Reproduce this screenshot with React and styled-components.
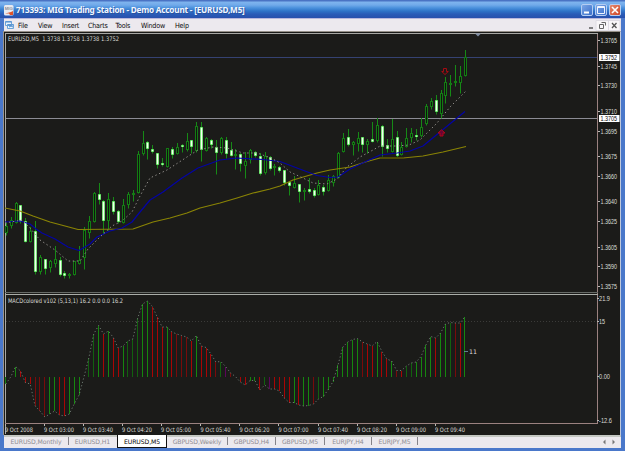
import React from 'react';
import styled, { createGlobalStyle } from 'styled-components';

const Global = createGlobalStyle`
  * { box-sizing: border-box; }
  html, body { margin: 0; padding: 0; overflow: hidden; background: #4a76c6; }
`;

const Frame = styled.div`
  width: 625px;
  height: 451px;
  display: flex;
  flex-direction: column;
  background: #4a78ca;
  font-family: "Noto Sans", "DejaVu Sans", sans-serif;
  overflow: hidden;
`;

const TitleBar = styled.header`
  flex: none;
  height: 18px;
  display: flex;
  align-items: center;
  padding: 2px 4px 0 4px;
  background: linear-gradient(#4a73c4 0, #4a73c4 1px, #7fb4ee 2px, #71aaea 5px, #4a90dc 8px, #2f74c8 11px, #2a5cb8 14px, #2850ac 18px);
`;

const AppLogo = styled.svg`
  flex: none;
  width: 10px;
  height: 11px;
`;

const Title = styled.h1`
  flex: 1;
  margin: 0 0 0 2px;
  font: 700 8.2px/14px "Noto Sans", sans-serif;
  letter-spacing: -0.2px;
  color: #f2f7ff;
  text-shadow: 1px 1px 0 #27519f;
  white-space: pre;
`;

const WindowButtons = styled.div`
  display: flex;
  gap: 2px;
`;

const WindowButton = styled.span`
  width: 12px;
  height: 12px;
  display: block;
  border: 1px solid #b5cdf2;
  border-radius: 2px;
  background: ${(p) => (p.$close ? 'linear-gradient(135deg,#e58a70,#cf4526)' : 'linear-gradient(135deg,#7aa5e6,#3b6fc9)')};
  svg { display: block; }
`;

const MenuBar = styled.nav`
  flex: none;
  height: 13px;
  margin: 0 4px;
  display: flex;
  align-items: center;
  background: #ece9ee;
  border-top: 1px solid #b9b7dc;
`;

const MenuIcon = styled.svg`
  flex: none;
  width: 10px;
  height: 9px;
  margin-right: 3px;
  margin-left: 1px;
`;

const MenuItem = styled.span`
  width: ${(p) => p.$w}px;
  font: 7.1px/11px "DejaVu Sans Condensed", "DejaVu Sans", sans-serif;
  letter-spacing: -0.2px;
  color: #080808;
  white-space: nowrap;
`;

const DocumentButtons = styled.svg`
  flex: none;
  width: 36px;
  height: 11px;
  margin-left: auto;
`;

const Workspace = styled.main`
  flex: none;
  height: 404px;
  margin: 0 4px 0 3px;
  background: #1b1b19;
  border: 1px solid #99948c;
  border-top-color: #969088;
  border-right-color: #bdc7dc;
  border-bottom: 0;
`;

const Chart = styled.svg`
  display: block;
  width: 616px;
  height: 403px;
  text { font-family: "DejaVu Sans", sans-serif; font-size: 6.2px; fill: #dcdcd8; }
  .scale text { font-family: "Liberation Sans Narrow", "Liberation Sans", sans-serif; font-size: 6.6px; }
`;

const TabBar = styled.footer`
  flex: none;
  height: 13px;
  margin: 0 4px;
  display: flex;
  align-items: stretch;
  background: #ece9ee;
  border-top: 2px solid #c4c7c2;
`;

const Tab = styled.span`
  width: ${(p) => p.$w}px;
  height: ${(p) => (p.$active ? 13 : 8)}px;
  margin-top: ${(p) => (p.$active ? -2 : 0)}px;
  padding-top: ${(p) => (p.$active ? 2 : 0)}px;
  text-align: center;
  white-space: nowrap;
  font: 6.2px/9px "DejaVu Sans", sans-serif;
  letter-spacing: -0.13px;
  color: ${(p) => (p.$active ? '#050505' : '#918e93')};
  background: ${(p) => (p.$active ? '#fff' : 'transparent')};
  border: solid #111;
  border-width: ${(p) => (p.$active ? '0 1px 1px 1px' : 0)};
  border-right: 1px solid ${(p) => (p.$active ? '#111' : '#858389')};
  ${(p) => p.$noRule && 'border-right-color: transparent;'}
`;

const TabArrows = styled.svg`
  width: 24px;
  height: 10px;
  margin-left: auto;
`;

const STEP = 4.885;

// [high, body top, body bottom, low, kind]: kind 1 is a filled bearish candle
const candles = [
  [223,226,232,235,0],[217,220,225,228,0],[202,203,222,223,0],[205,205,222,223,1],[218,221,242,242,1],
  [227,231,241,242,0],[221,231,272,274,1],[255,257,271,274,0],[259,259,269,274,1],[260,261,267,272,0],
  [246,259,263,267,0],[257,260,275,276,1],[271,273,276,278,1],[273,274,275,278,0],[261,261,274,275,0],
  [246,260,263,264,0],[227,230,257,269,0],[216,221,232,238,0],[192,193,221,222,0],[183,194,200,204,1],
  [200,201,221,234,1],[193,199,220,230,0],[197,201,212,214,1],[210,211,222,223,1],[199,205,222,223,0],
  [192,194,204,208,0],[190,193,194,201,0],[151,154,192,193,0],[131,143,153,155,0],[141,142,149,159,1],
  [145,149,152,153,1],[153,153,165,168,1],[158,163,165,166,1],[148,148,166,167,0],[147,149,155,158,1],
  [143,147,153,154,0],[144,145,147,152,1],[133,141,149,151,0],[140,140,147,153,1],[122,126,150,152,0],
  [122,127,150,161,1],[137,138,150,151,0],[139,140,145,148,1],[140,147,153,174,1],[137,138,152,154,0],
  [137,140,154,158,1],[142,150,156,156,1],[149,154,155,169,0],[153,154,164,171,1],[152,161,165,178,0],
  [149,150,159,163,0],[151,152,156,157,1],[153,156,174,175,1],[152,156,172,174,0],[156,157,169,170,1],
  [164,166,167,175,0],[166,167,171,172,1],[170,170,183,185,1],[181,182,186,195,1],[176,183,187,188,0],
  [184,184,192,202,1],[188,190,191,200,0],[178,189,192,193,1],[188,190,196,197,1],[180,185,194,195,0],
  [185,187,192,195,1],[175,180,190,191,0],[175,176,182,186,0],[152,153,177,178,0],[133,138,151,152,0],
  [129,137,145,146,1],[141,142,144,155,0],[132,138,143,151,0],[137,137,145,152,1],[139,141,144,153,0],
  [122,139,142,142,1],[118,125,140,142,0],[125,126,147,156,1],[139,145,149,152,1],[119,139,151,152,0],
  [131,137,156,157,1],[142,147,154,155,0],[128,138,146,147,0],[128,133,137,142,0],[129,135,137,140,1],
  [118,127,135,137,0],[104,106,123,125,0],[98,101,106,109,0],[95,100,112,114,1],[90,93,113,118,0],
  [77,82,95,103,0],[75,83,84,96,0],[65,81,82,86,0],[66,76,82,93,0],[50,57,75,76,0],
];

const histogram = [
  [384,'g'],[377,'g'],[366.5,'g'],[371,'r'],[382.5,'r'],[384,'r'],[406,'d'],[411,'d'],[417,'d'],[414,'g'],[411,'g'],[415,'r'],
  [416,'r'],[414,'g'],[404,'g'],[395,'g'],[377,'g'],[358,'f'],[334,'f'],[325.5,'g'],[334,'r'],[331,'g'],[337.5,'r'],[348,'r'],
  [346,'g'],[341,'f'],[339,'f'],[318,'f'],[304,'g'],[301,'g'],[306.5,'r'],[317,'r'],[327,'r'],[327,'g'],[332,'r'],[334,'d'],
  [335.5,'d'],[337,'d'],[341,'r'],[335.5,'g'],[346,'r'],[347.5,'r'],[354,'r'],[362,'d'],[361.5,'f'],[366.5,'p'],[373,'d'],
  [376.5,'r'],[382,'r'],[385,'r'],[380.5,'g'],[380.5,'g'],[390,'r'],[385,'f'],[389,'p'],[389,'r'],[391,'r'],[398,'r'],
  [402.5,'r'],[402.5,'g'],[405,'r'],[406,'g'],[405.5,'g'],[404,'d'],[399,'f'],[396.5,'g'],[389.5,'g'],[381.5,'g'],[365,'g'],
  [347,'g'],[342,'g'],[339.5,'g'],[338.5,'g'],[342,'d'],[344,'r'],[346,'r'],[341.5,'g'],[351.5,'r'],[359,'r'],[361,'g'],
  [370.5,'d'],[370.5,'r'],[366,'f'],[363,'f'],[362,'g'],[356.5,'g'],[345,'g'],[336.5,'g'],[338,'r'],[333,'g'],[324,'g'],
  [322.5,'f'],[323,'d'],[323,'r'],[316.5,'g'],
];

const barColors = { g: '#16860f', f: '#12610f', r: '#a90505', d: '#790b0b', p: '#5c0559' };

const slowAverage = '5,208 20,211 33,216 50,222 65,226 78,229.5 133,229 153,222 170,218 187,213 200,208 220,203 237,198 253,193 270,189 280,186 293,180 317,173 330,170 350,167 367,161.5 380,158 403,158 423,156 443,152 466,146.5';
const midAverage = '5,222 20,221 30,224 36,229 42,233 55,239 68,247 79,250.5 90,244 97,237 110,231 122,228 132,222 140,212 150,200 163,192 182,178 198,168 220,160 237,158 263,159.5 280,161.5 297,168 317,175.5 330,177.5 338,177 350,169 367,161 380,155 397,153 410,151 423,146 440,132 465,111.5';
const fastAverage = '5,223 22,220 30,228 40,240 55,250 68,261 80,261 88,249 100,237 112,226 122,221 132,212 140,196 150,178 167,170 187,157 198,150 213,147 227,148 243,153 257,153 271,158 280,163 290,172 303,178 313,183 327,184 337,179 347,167 360,157 373,150 380,146 397,146 409,145 420,140 437,123 450,107 466,91';

const priceLabels = [
  ['1.3765', 40], ['1.3745', 66], ['1.3730', 85.5], ['1.3710', 111], ['1.3695', 131], ['1.3675', 156],
  ['1.3660', 176], ['1.3640', 201.5], ['1.3625', 221], ['1.3605', 247], ['1.3590', 266], ['1.3575', 286],
];
const markers = [['1.3752', 57], ['1.3705', 118]];
const macdLabels = [['21.9', 298.5, 11], ['15', 321, 6], ['0.00', 376.5, 11], ['-12.6', 420, 13]];
const timeLabels = [
  ['9 Oct 2008', 5, 28], ['9 Oct 03:00', 44, 30], ['9 Oct 03:40', 83, 30], ['9 Oct 04:20', 122, 30],
  ['9 Oct 05:00', 161, 30], ['9 Oct 05:40', 200.5, 30], ['9 Oct 06:20', 239.5, 30], ['9 Oct 07:00', 278.5, 30],
  ['9 Oct 07:40', 318, 30], ['9 Oct 08:20', 357, 30], ['9 Oct 09:00', 396, 30], ['9 Oct 09:40', 435, 30],
];

const menus = [['File', 20], ['View', 24], ['Insert', 26], ['Charts', 27.5], ['Tools', 25.5], ['Window', 34], ['Help', 20]];
const tabs = [
  { name: 'EURUSD,Monthly', w: 65 },
  { name: 'EURUSD,H1', w: 48, noRule: true },
  { name: 'EURUSD,M5', w: 50, active: true },
  { name: 'GBPUSD,Weekly', w: 61 },
  { name: 'GBPUSD,H4', w: 48 },
  { name: 'GBPUSD,M5', w: 49 },
  { name: 'EURJPY,H4', w: 47 },
  { name: 'EURJPY,M5', w: 46 },
];

function Label({ x, y, w, children, ...rest }) {
  return <text x={x} y={y} textLength={w} lengthAdjust="spacingAndGlyphs" {...rest}>{children}</text>;
}

function Candle({ x, data }) {
  const [high, top, bottom, low, filled] = data;
  const left = Math.round(x) - 1;
  return (
    <g>
      <path d={`M${left + 1.5} ${high}V${top}M${left + 1.5} ${bottom}V${low + 0.5}`} stroke="#168a16" />
      {filled ? (
        <>
          <rect x={left} y={top} width="3" height={Math.max(2, bottom - top)} fill="#2cd02c" />
          <rect x={left + 0.6} y={top + 0.6} width="1.8" height={Math.max(1, bottom - top - 1.2)} fill="#f3fff0" />
        </>
      ) : (
        <rect x={left + 0.5} y={top + 0.5} width="2" height={Math.max(0.4, bottom - top)} fill="#10160f" stroke="#137c13" />
      )}
    </g>
  );
}

function TradingChart() {
  return (
    <Chart viewBox="4 32 616 403">
      <g shapeRendering="crispEdges">
        <path d="M5.5 434V33.5H597.5V423" fill="none" stroke="#a8a8a4" />
        <path d="M597.5 34V423M5 423.5H598" stroke="#9b8280" />
        <path d="M5 292.5H598" stroke="#666a66" />
        <path d="M5 294.5H598" stroke="#aaada8" />
        <path d="M6 57.5H597" stroke="#354272" />
        <path d="M6 118.5H597" stroke="#8c8c94" />
        <path d="M6 321.5H597" stroke="#3b3b39" strokeDasharray="1 2" />
      </g>
      <path d="M475 33.5h6l-3 3z" fill="#7f8ca2" />
      {candles.map((c, i) => <Candle key={i} x={5.8 + i * STEP} data={c} />)}
      <g fill="none" strokeLinejoin="round">
        <polyline points={slowAverage} stroke="#8a8405" strokeWidth="1.2" />
        <path d="M380 158H404" stroke="#4d4906" strokeWidth="2" />
        <polyline points={midAverage} stroke="#0404a4" strokeWidth="1.25" />
        <polyline points={fastAverage} stroke="#8f8c88" strokeWidth="1" strokeDasharray="1.4 2.6" />
      </g>
      <path d="M443.5 68.5h3v3h1.8l-3.3 3l-3.3-3h1.8z" fill="none" stroke="#a60a12" />
      <path d="M440 136v-3h-2l3.5-3.2l3.5 3.2h-2v3z" fill="#650535" stroke="#b3051b" />
      <Label x="8" y="40.5" w="111">{'EURUSD,M5 \u00a01.3738 1.3758 1.3738 1.3752'}</Label>

      <g shapeRendering="crispEdges">
        {histogram.map(([y, tone], i) => (
          <rect key={i} x={Math.round(5.3 + i * STEP)} y={Math.min(y, 376.5)} width="1" height={Math.abs(y - 376.5)} fill={barColors[tone]} />
        ))}
      </g>
      <polyline
        points={histogram.map(([y], i) => `${5.8 + i * STEP},${y}`).join(' ')}
        fill="none" stroke="#748078" strokeWidth="0.9" strokeDasharray="1.2 2.3"
      />
      <Label x="8" y="302.5" w="115">MACDcolored v102 (5,13,1) 16.2 0.0 0.0 16.2</Label>
      <path d="M464 351.5h4" stroke="#5f7f90" />
      <Label x="469" y="353.5" w="8">11</Label>

      <g className="scale">
        {priceLabels.map(([t, y]) => (
          <g key={t}>
            <path d={`M598 ${Math.floor(y) + 0.5}h2`} stroke="#b8b8b4" />
            <Label x="600.5" y={y + 2.6} w="16.5">{t}</Label>
          </g>
        ))}
        {markers.map(([t, y]) => (
          <g key={t}>
            <rect x="599" y={y - 3} width="20.5" height="7" fill="#fff" />
            <PriceMarkerText x="600.5" y={y + 2.8} textLength="16.5" lengthAdjust="spacingAndGlyphs">{t}</PriceMarkerText>
          </g>
        ))}
        {macdLabels.map(([t, y, w]) => (
          <g key={t}>
            <path d={`M597 ${Math.floor(y) + 0.5}h2`} stroke="#b8b8b4" />
            <Label x="599" y={y + 2.5} w={w}>{t}</Label>
          </g>
        ))}
      </g>
      {timeLabels.map(([t, x, w]) => (
        <g key={t}>
          <path d={`M${Math.floor(x) + 0.5} 424v2`} stroke="#b8b8b4" />
          <Label x={x} y="431.7" w={w}>{t}</Label>
        </g>
      ))}
    </Chart>
  );
}

const PriceMarkerText = styled.text`
  &&& { fill: #080808; }
`;

export default function App() {
  return (
    <>
      <Global />
      <Frame>
        <TitleBar>
          <AppLogo viewBox="0 0 10 11">
            <rect width="9.5" height="10.5" rx="1.5" fill="#e8eaf0" />
            <text x="0.7" y="5" fontSize="4.3" fontFamily="Liberation Sans" fontWeight="700" fill="#8a8f9b">MIG</text>
            <path d="M1 8.5h4l1 1.5h3V6L7 7z" fill="#e0542a" />
          </AppLogo>
          <Title>713393: MIG Trading Station - Demo Account - [EURUSD,M5]</Title>
          <WindowButtons>
            <WindowButton><svg width="10" height="10"><path d="M2 7.5h5" stroke="#fff" strokeWidth="2" /></svg></WindowButton>
            <WindowButton><svg width="10" height="10"><path d="M1.5 1.5h7v7h-7zM1.5 2.5h7" fill="none" stroke="#eef4ff" /></svg></WindowButton>
            <WindowButton $close><svg width="10" height="10"><path d="M2 2l6 6M8 2l-6 6" stroke="#fff" strokeWidth="1.6" /></svg></WindowButton>
          </WindowButtons>
        </TitleBar>
        <MenuBar>
          <MenuIcon viewBox="0 0 10 9">
            <path d="M.5 .5h6v4h-6zM2.5 3.5h6v4h-6z" fill="#e9f3fc" stroke="#6da4d8" />
            <path d="M.5 1h6M2.5 4h6M4 6l2-1l2 1" fill="none" stroke="#4b8bce" />
          </MenuIcon>
          {menus.map(([name, w]) => <MenuItem key={name} $w={w}>{name}</MenuItem>)}
          <DocumentButtons viewBox="0 0 36 11">
            <path d="M11 .5h24v10h-24zM23.5 .5v10" fill="#f8f6f8" stroke="#dfdce4" />
            <path d="M4 8h4" stroke="#444" strokeWidth="1.3" />
            <path d="M16.5 2.5h4v3M14.5 4.5h4v4h-4z" fill="none" stroke="#666" />
            <path d="M27 3l4.5 5M31.5 3L27 8" stroke="#555" strokeWidth="1.3" />
          </DocumentButtons>
        </MenuBar>
        <Workspace><TradingChart /></Workspace>
        <TabBar>
          {tabs.map((t) => (
            <Tab key={t.name} $w={t.w} $active={t.active} $noRule={t.noRule}>{t.name}</Tab>
          ))}
          <TabArrows viewBox="0 0 24 10">
            <path d="M8.5 2.5v5L6 5zM15.5 2.5v5L18 5z" fill="#777" />
          </TabArrows>
        </TabBar>
      </Frame>
    </>
  );
}
